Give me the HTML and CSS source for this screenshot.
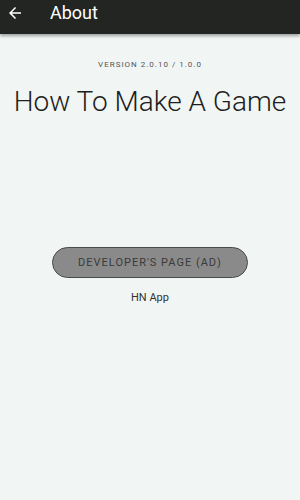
FILE: index.html
```html
<!DOCTYPE html>
<html lang="en">
<head>
    <meta charset="UTF-8">
    <meta name="viewport" content="width=device-width, initial-scale=1.0">
    <title>About</title>
    <link rel="stylesheet" href="styles.css">
</head>
<body>
    <header class="toolbar">
        <!-- back arrow -->
        <svg class="back" viewBox="0 0 24 24" xmlns="http://www.w3.org/2000/svg">
            <path d="M20 11H7.83l5.59-5.59L12 4l-8 8 8 8 1.41-1.41L7.83 13H20v-2z" fill="#ffffff"/>
        </svg>
        <h1 class="title">About</h1>
    </header>

    <main class="content">
        <p class="version">VERSION 2.0.10 / 1.0.0</p>
        <h2 class="app-name">How To Make A Game</h2>

        <div class="actions">
            <button class="btn-dev">DEVELOPER'S PAGE (AD)</button>
            <p class="dev-name">HN App</p>
        </div>
    </main>
</body>
</html>
```

FILE: styles.css
```css
:root {
    --color-bar: #232522;
    --color-background: #f1f5f4;
    --color-text: #2a2a2a;
    --color-muted: #555555;
    --color-button: #8a8a8a;
    --color-button-border: #4a4a4a;
}

* {
    margin: 0;
    padding: 0;
    box-sizing: border-box;
}

body {
    font-family: Roboto, "Noto Sans", sans-serif;
    background-color: var(--color-background);
    color: var(--color-text);
    min-height: 100vh;
}

.toolbar {
    height: 34px;
    background-color: var(--color-bar);
    display: flex;
    align-items: flex-start;
    padding: 3px 0 0 6px;
    box-shadow: 0 2px 3px rgba(0, 0, 0, 0.35);
}

.back {
    width: 18px;
    height: 18px;
    margin-top: 1px;
}

.title {
    color: #ffffff;
    font-size: 18px;
    font-weight: 400;
    line-height: 20px;
    margin-left: 26px;
}

.content {
    display: flex;
    flex-direction: column;
    align-items: center;
    padding-top: 26px;
}

.version {
    font-size: 8px;
    letter-spacing: 1px;
    color: var(--color-muted);
}

.app-name {
    font-size: 28px;
    font-weight: 300;
    margin-top: 16px;
    color: #1e1e1e;
}

.actions {
    display: flex;
    flex-direction: column;
    align-items: center;
    margin-top: 129px;
}

.btn-dev {
    width: 196px;
    height: 31px;
    border-radius: 16px;
    background-color: var(--color-button);
    border: 1.5px solid var(--color-button-border);
    color: #3a3a3a;
    font-family: Roboto, "Noto Sans", sans-serif;
    font-size: 11px;
    letter-spacing: 1px;
}

.dev-name {
    font-size: 11px;
    margin-top: 13px;
    color: #333333;
}
```
